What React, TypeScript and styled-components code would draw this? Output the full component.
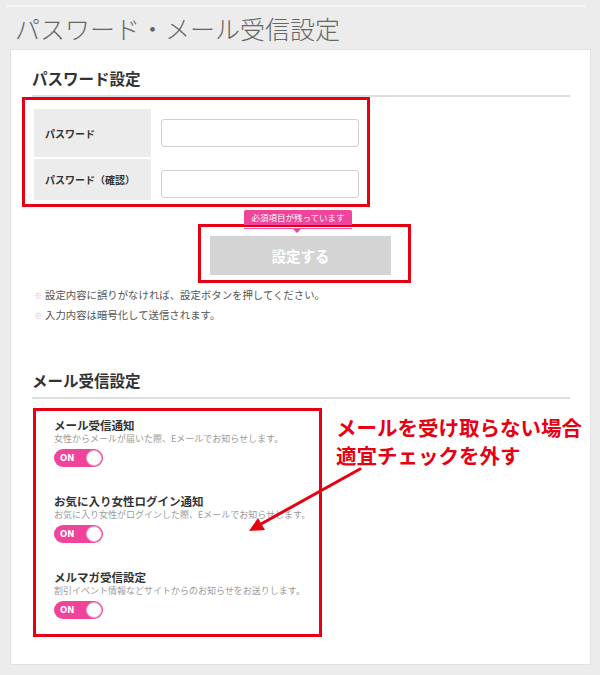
import styled, { createGlobalStyle } from "styled-components";

const GlobalStyle = createGlobalStyle`
  body {
    margin: 0;
    background: #ececec;
    font-family: "Noto Sans CJK JP", "Noto Sans", sans-serif;
    color: #333;
  }
`;

const RED = "#e60012";
const PINK = "#f0439a";

const mailItems = [
    { title: "メール受信通知", desc: "女性からメールが届いた際、Eメールでお知らせします。" },
    { title: "お気に入り女性ログイン通知", desc: "お気に入り女性がログインした際、Eメールでお知らせします。" },
    { title: "メルマガ受信設定", desc: "割引イベント情報などサイトからのお知らせをお送りします。" },
];

export default function App() {
    return (<Page>
        <GlobalStyle />
        <TopRule />
        <PageTitle>パスワード・メール受信設定</PageTitle>
        <Card>
            <SectionHeading>パスワード設定</SectionHeading>
            <FieldBox>
                <FieldGrid>
                    <LabelCell $h={48}>パスワード</LabelCell>
                    <InputCell $top={10}><TextInput type="password" /></InputCell>
                    <LabelCell $h={41}>パスワード（確認）</LabelCell>
                    <InputCell $top={11}><TextInput type="password" /></InputCell>
                </FieldGrid>
            </FieldBox>

            <ButtonArea>
                <Tooltip>必須項目が残っています</Tooltip>
                <ButtonBox>
                    <SubmitButton type="button">設定する</SubmitButton>
                </ButtonBox>
            </ButtonArea>

            <Notes>
                <Note>設定内容に誤りがなければ、設定ボタンを押してください。</Note>
                <Note>入力内容は暗号化して送信されます。</Note>
            </Notes>

            <SectionHeading $gap={43}>メール受信設定</SectionHeading>
            <MailRow>
                <MailBox>
                    {mailItems.map((item, index) => (
                        <MailItem key={index}>
                            <ItemTitle>{item.title}</ItemTitle>
                            <ItemDesc>{item.desc}</ItemDesc>
                            <Toggle>
                                <ToggleText>ON</ToggleText>
                                <Knob />
                            </Toggle>
                        </MailItem>
                    ))}
                </MailBox>
                <Annotation>
                    メールを受け取らない場合<br />
                    適宜チェックを外す
                </Annotation>
                <ArrowLayer width="560" height="230" viewBox="0 0 560 230">
                    <line x1="328" y1="61" x2="229" y2="116" stroke={RED} strokeWidth="3" strokeLinecap="round" />
                    <polygon points="217,123 233,122 226,110" fill={RED} />
                </ArrowLayer>
            </MailRow>
        </Card>
    </Page>)
}

const Page = styled.div`
  padding: 5px 9px 0 10px;
  min-height: 670px;
  box-sizing: border-box;
`;

const TopRule = styled.div`
  height: 2px;
  margin: 0 5px 0 -4px;
  background: #f5f5f5;
`;

const PageTitle = styled.h1`
  margin: 0 0 0 5px;
  font-size: 25px;
  line-height: 42px;
  font-weight: 300;
  color: #666;
  white-space: nowrap;
`;

const Card = styled.div`
  width: 581px;
  box-sizing: border-box;
  background: #fff;
  border: 1px solid #e2e2e2;
  padding: 0 20px 27px 21px;
`;

const SectionHeading = styled.h2<{ $gap?: number }>`
  margin: ${(props) => props.$gap ?? 16}px 0 0;
  padding-bottom: 5px;
  border-bottom: 2px solid #dedede;
  font-size: 15.5px;
  line-height: 24px;
  font-weight: bold;
  color: #333;
`;

const FieldBox = styled.div`
  margin-left: -10px;
  width: 348px;
  box-sizing: border-box;
  border: 3px solid ${RED};
  padding: 9px 9px 4px;
`;

const FieldGrid = styled.div`
  display: grid;
  grid-template-columns: 117px 198px;
  column-gap: 10px;
  row-gap: 2px;
`;

const LabelCell = styled.div<{ $h: number }>`
  height: ${(props) => props.$h}px;
  display: flex;
  align-items: center;
  padding-left: 11px;
  background: #ececec;
  font-size: 10px;
  font-weight: bold;
  color: #333;
`;

const InputCell = styled.div<{ $top: number }>`
  padding-top: ${(props) => props.$top}px;
`;

const TextInput = styled.input`
  display: block;
  width: 198px;
  height: 28px;
  box-sizing: border-box;
  border: 1px solid #cfcfcf;
  border-radius: 3px;
  background: #fff;
`;

const ButtonArea = styled.div`
  position: relative;
  display: flex;
  margin-top: 17px;
  padding-left: 166px;
`;

const Tooltip = styled.div`
  position: absolute;
  left: 212px;
  top: -14px;
  width: 108px;
  height: 15px;
  border-radius: 2px 2px 0 0;
  background: ${PINK};
  color: #fff;
  font-size: 8.5px;
  line-height: 15px;
  text-align: center;
  white-space: nowrap;
  z-index: 2;

  &::before {
    content: "";
    position: absolute;
    left: 0;
    right: 0;
    top: 18px;
    height: 1px;
    background: #e85aa8;
  }

  &::after {
    content: "";
    position: absolute;
    left: 49px;
    top: 19px;
    border-left: 4px solid transparent;
    border-right: 4px solid transparent;
    border-top: 4px solid ${PINK};
  }
`;

const ButtonBox = styled.div`
  width: 213px;
  box-sizing: border-box;
  border: 3px solid ${RED};
  padding: 9px 17px 5px 9px;
`;

const SubmitButton = styled.button`
  display: block;
  width: 181px;
  height: 39px;
  border: none;
  background: #d4d4d4;
  color: #fff;
  font-family: inherit;
  font-size: 14.5px;
  font-weight: bold;
`;

const Notes = styled.div`
  margin-top: 2px;
  padding-left: 2px;
`;

const Note = styled.div`
  font-size: 10.4px;
  line-height: 19px;
  color: #555;
  white-space: nowrap;

  &::before {
    content: "※";
    color: #f4a6c8;
    font-size: 8px;
    margin-right: 3px;
  }
`;

const MailRow = styled.div`
  position: relative;
  display: flex;
  align-items: flex-start;
  gap: 14px;
  margin-top: 9px;
  padding-left: 1px;
`;

const MailBox = styled.div`
  width: 289px;
  box-sizing: border-box;
  border: 3px solid ${RED};
  padding: 6px 18px 15px;
  display: flex;
  flex-direction: column;
  gap: 26px;
`;

const MailItem = styled.div`
  display: flex;
  flex-direction: column;
  align-items: flex-start;
`;

const ItemTitle = styled.div`
  font-size: 11.5px;
  line-height: 16px;
  font-weight: bold;
  color: #333;
  white-space: nowrap;
`;

const ItemDesc = styled.div`
  font-size: 9px;
  line-height: 12px;
  color: #9a9a9a;
  white-space: nowrap;
`;

const Toggle = styled.div`
  position: relative;
  margin-top: 4px;
  width: 49px;
  height: 18px;
  border-radius: 9px;
  background: ${PINK};
`;

const ToggleText = styled.span`
  display: block;
  padding-left: 6px;
  font-family: "DejaVu Sans", sans-serif;
  font-size: 8.5px;
  font-weight: bold;
  line-height: 18px;
  color: #fff;
`;

const Knob = styled.span`
  position: absolute;
  right: 1px;
  top: 1px;
  width: 16px;
  height: 16px;
  box-sizing: border-box;
  border-radius: 50%;
  background: #fff;
  border: 1px solid #f7a9cf;
`;

const Annotation = styled.div`
  margin-top: 5px;
  font-size: 20.5px;
  line-height: 28px;
  font-weight: bold;
  color: ${RED};
  white-space: nowrap;
`;

const ArrowLayer = styled.svg`
  position: absolute;
  left: 0;
  top: 0;
  pointer-events: none;
`;
